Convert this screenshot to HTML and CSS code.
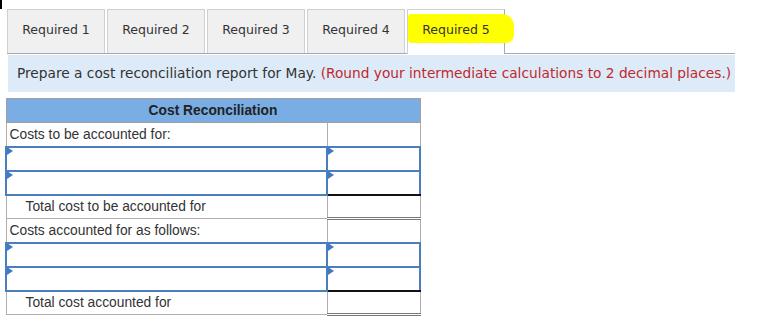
FILE: index.html
```html
<!DOCTYPE html>
<html>
<head>
<meta charset="utf-8">
<link rel="stylesheet" href="styles.css">
</head>
<body>
<div class="mark"></div>
<div class="tabs">
  <div class="tab">Required 1</div>
  <div class="tab">Required 2</div>
  <div class="tab">Required 3</div>
  <div class="tab">Required 4</div>
  <div class="tab active"><span class="hl"></span><span class="tab-label">Required 5</span></div>
</div>
<div class="info">Prepare a cost reconciliation report for May. <span class="red">(Round your intermediate calculations to 2 decimal places.)</span></div>
<table class="recon">
  <tr><th colspan="2">Cost Reconciliation</th></tr>
  <tr><td class="lbl">Costs to be accounted for:</td><td class="val"></td></tr>
  <tr class="inp"><td><span class="tri"></span></td><td><span class="tri"></span></td></tr>
  <tr class="inp"><td><span class="tri"></span></td><td class="last"><span class="tri"></span></td></tr>
  <tr><td class="lbl indent">Total cost to be accounted for</td><td class="val total"></td></tr>
  <tr><td class="lbl">Costs accounted for as follows:</td><td class="val"></td></tr>
  <tr class="inp"><td><span class="tri"></span></td><td><span class="tri"></span></td></tr>
  <tr class="inp"><td><span class="tri"></span></td><td class="last"><span class="tri"></span></td></tr>
  <tr><td class="lbl indent">Total cost accounted for</td><td class="val total"></td></tr>
</table>
</body>
</html>
```
FILE: styles.css
```css
html, body {
  margin: 0;
  padding: 0;
  background: #fff;
}
body {
  font-family: "DejaVu Sans", Verdana, sans-serif;
  color: #333;
}
.mark {
  width: 2px;
  height: 9px;
  background: #000;
}
.tabs {
  display: flex;
  gap: 2px;
  margin-left: 7px;
  width: 728px;
  height: 44px;
  border-bottom: 1px solid #a9a9a9;
}
.tab {
  position: relative;
  width: 98px;
  height: 44px;
  padding-bottom: 4px;
  background: #f0f0f0;
  border: 1px solid #d0d0d0;
  border-bottom: none;
  box-sizing: border-box;
  display: flex;
  align-items: center;
  justify-content: center;
  font-size: 12.5px;
  color: #333;
}
.tab.active {
  background: #fff;
  height: 45px;
  padding-bottom: 5px;
  margin-bottom: -1px;
  border-right-color: #a9a9a9;
}
.hl {
  position: absolute;
  left: 0;
  top: 4px;
  width: 106px;
  height: 29px;
  background: #ffff00;
  border-radius: 3px 12px 8px 4px;
}
.tab-label {
  position: relative;
}
.info {
  margin: 1px 0 0 8px;
  width: 727px;
  height: 37px;
  box-sizing: border-box;
  padding-left: 9px;
  line-height: 37px;
  background: #ddebf8;
  font-size: 13.72px;
  color: #333;
  white-space: nowrap;
}
.red {
  color: #c0282e;
}
.recon {
  margin: 6px 0 0 5px;
  border-collapse: collapse;
  font-family: "Liberation Sans", Arial, sans-serif;
  font-size: 13.8px;
  color: #333;
}
.recon th {
  height: 23px;
  padding: 0;
  background: #79ade4;
  border: 1px solid #a0a0a0;
  font-weight: bold;
  font-size: 13.8px;
  color: #222;
  text-align: center;
}
.recon td {
  height: 24px;
  padding: 0;
  border: 1px solid #b0b0b0;
  box-sizing: border-box;
  vertical-align: middle;
}
.recon td:first-child {
  width: 321px;
}
.recon td:last-child {
  width: 93px;
}
.recon td.lbl {
  padding-left: 3px;
}
.recon td.indent {
  padding-left: 19px;
}
.recon tr.inp td {
  border: 2px solid #4a7ebf;
  vertical-align: top;
}
.recon tr.inp td.last {
  border-bottom-color: #111;
}
.recon td.total {
  border-bottom: 3px double #777;
}
.tri {
  display: block;
  width: 0;
  height: 0;
  border-top: 4px solid transparent;
  border-bottom: 4px solid transparent;
  border-left: 6px solid #3f7cc8;
  margin-top: -1px;
}
```
